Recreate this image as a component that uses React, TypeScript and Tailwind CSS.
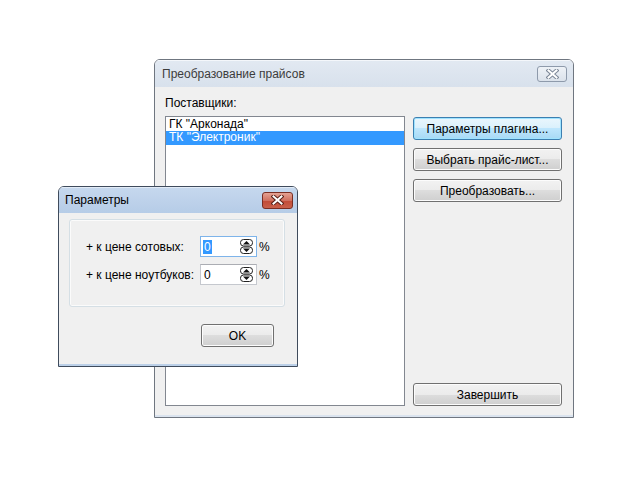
import React from "react";

const font = { fontFamily: '"Liberation Sans", Arial, sans-serif' };

function CloseGlyph({ dark }: { dark: string }) {
  return (
    <svg width="13" height="10" viewBox="0 0 13 10">
      <path d="M2.5 1.5 L10.5 8.5 M10.5 1.5 L2.5 8.5" stroke={dark} strokeWidth="4" strokeLinecap="square" />
      <path d="M2.5 1.5 L10.5 8.5 M10.5 1.5 L2.5 8.5" stroke="#ffffff" strokeWidth="2" strokeLinecap="square" />
    </svg>
  );
}

function Spinner() {
  return (
    <svg width="13" height="15" viewBox="0 0 13 15">
      <rect x="0.5" y="0.5" width="12" height="6.5" rx="3" fill="#fff" stroke="#222" />
      <path d="M3 5.5 L6.5 2 L10 5.5 Z" fill="#111" />
      <rect x="0.5" y="8" width="12" height="6.5" rx="3" fill="#fff" stroke="#222" />
      <path d="M3 9.5 L6.5 13 L10 9.5 Z" fill="#111" />
    </svg>
  );
}

function Button({ label, primary }: { label: string; primary?: boolean }) {
  return (
    <div
      className={
        primary
          ? "w-[149px] h-[23px] rounded-[3px] border border-[#3c7fb1] bg-[linear-gradient(#eaf6fd_0%,#d9f0fc_50%,#bee6fd_50%,#a7d9f5_100%)] shadow-[inset_0_0_0_1px_#9fe3ff] flex items-center justify-center text-[12px] text-black"
          : "w-[149px] h-[23px] rounded-[3px] border border-[#707070] bg-[linear-gradient(#f2f2f2_0%,#ebebeb_50%,#dddddd_50%,#cfcfcf_100%)] shadow-[inset_0_0_0_1px_#fcfcfc] flex items-center justify-center text-[12px] text-black"
      }
    >
      {label}
    </div>
  );
}

function NumberField({ focused }: { focused?: boolean }) {
  return (
    <div
      className={
        focused
          ? "w-[57px] h-[21px] border border-[#7eb4ea] bg-white flex items-center pl-[2px] pr-[3px]"
          : "w-[57px] h-[21px] border border-[#c5c8ce] border-t-[#abadb3] bg-white flex items-center pl-[2px] pr-[3px]"
      }
    >
      {focused ? (
        <span className="bg-[#3399ff] text-white text-[12px] leading-[14px] px-[1px]">0</span>
      ) : (
        <span className="text-black text-[12px] leading-[14px] px-[1px]">0</span>
      )}
      <span className="ml-auto flex">
        <Spinner />
      </span>
    </div>
  );
}

export default function App() {
  return (
    <div className="relative w-[637px] h-[482px] bg-white overflow-hidden" style={font}>
      {/* main window */}
      <div className="absolute left-[154px] top-[59px] w-[420px] h-[359px] border border-[#6f7680] rounded-t-[6px] overflow-hidden flex flex-col">
        <div className="h-[28px] bg-[linear-gradient(#e2e9f2,#d8e1ec)] flex items-center justify-between pl-[7px] pr-[6px] shadow-[inset_0_1px_0_#f4f7fb]">
          <span className="text-[12px] text-[#3c3c3c]">Преобразование прайсов</span>
          <div className="w-[30px] h-[16px] rounded-[3px] border border-[#8e9aab] bg-[linear-gradient(#eef2f7,#dbe2eb)] flex items-center justify-center">
            <CloseGlyph dark="#7d8898" />
          </div>
        </div>
        <div className="flex-1 bg-[#f0f0f0] flex pl-[10px] pr-[11px] pt-[9px] pb-[9px] gap-[8px] border-b-[2px] border-[#dae3ee]">
          <div className="w-[240px] flex flex-col">
            <div className="text-[12px] leading-[15px] text-black">Поставщики:</div>
            <div className="mt-[5px] h-[290px] border border-[#828790] bg-white pt-[1px] text-[12px] leading-[13px]">
              <div className="pl-[3px] text-black">ГК "Арконада"</div>
              <div className="pl-[3px] bg-[#3399ff] text-white h-[14px]">ТК "Электроник"</div>
            </div>
          </div>
          <div className="flex flex-col gap-[8px] pt-[21px]">
            <Button label="Параметры плагина..." primary />
            <Button label="Выбрать прайс-лист..." />
            <Button label="Преобразовать..." />
            <div className="mt-auto">
              <Button label="Завершить" />
            </div>
          </div>
        </div>
      </div>

      {/* params dialog */}
      <div className="absolute left-[58px] top-[186px] w-[240px] h-[181px] border border-[#3f4b5c] rounded-t-[6px] overflow-hidden flex flex-col">
        <div className="h-[26px] bg-[linear-gradient(#c6d8ee,#b6cce7)] flex items-center justify-between pl-[6px] pr-[4px] shadow-[inset_0_1px_0_#e3ecf7]">
          <span className="text-[12px] text-black">Параметры</span>
          <div className="w-[31px] h-[17px] rounded-[3px] border border-[#7a2e23] bg-[linear-gradient(#e5a293,#d0705f_50%,#c24a36_50%,#c9604a)] flex items-center justify-center">
            <CloseGlyph dark="#5a2219" />
          </div>
        </div>
        <div className="flex-1 bg-[#f0f0f0] flex flex-col pt-[6px] pl-[10px] pr-[12px] border-b-[2px] border-[#bcd0e8]">
          <div className="h-[88px] rounded-[3px] border border-[#d5dfe5] shadow-[inset_0_0_0_1px_#fbfbfb] pt-[16px] pl-[16px] flex flex-col gap-[7px]">
            <div className="flex items-center">
              <span className="w-[114px] text-[12px] text-black">+ к цене сотовых:</span>
              <NumberField focused />
              <span className="ml-[2px] text-[12px] text-black">%</span>
            </div>
            <div className="flex items-center">
              <span className="w-[114px] text-[12px] text-black">+ к цене ноутбуков:</span>
              <NumberField />
              <span className="ml-[2px] text-[12px] text-black">%</span>
            </div>
          </div>
          <div className="mt-[17px] self-end mr-[11px] w-[73px] h-[23px] rounded-[3px] border border-[#707070] bg-[linear-gradient(#f2f2f2_0%,#ebebeb_50%,#dddddd_50%,#cfcfcf_100%)] shadow-[inset_0_0_0_1px_#fcfcfc] flex items-center justify-center text-[12px] text-black">
            OK
          </div>
        </div>
      </div>
    </div>
  );
}
